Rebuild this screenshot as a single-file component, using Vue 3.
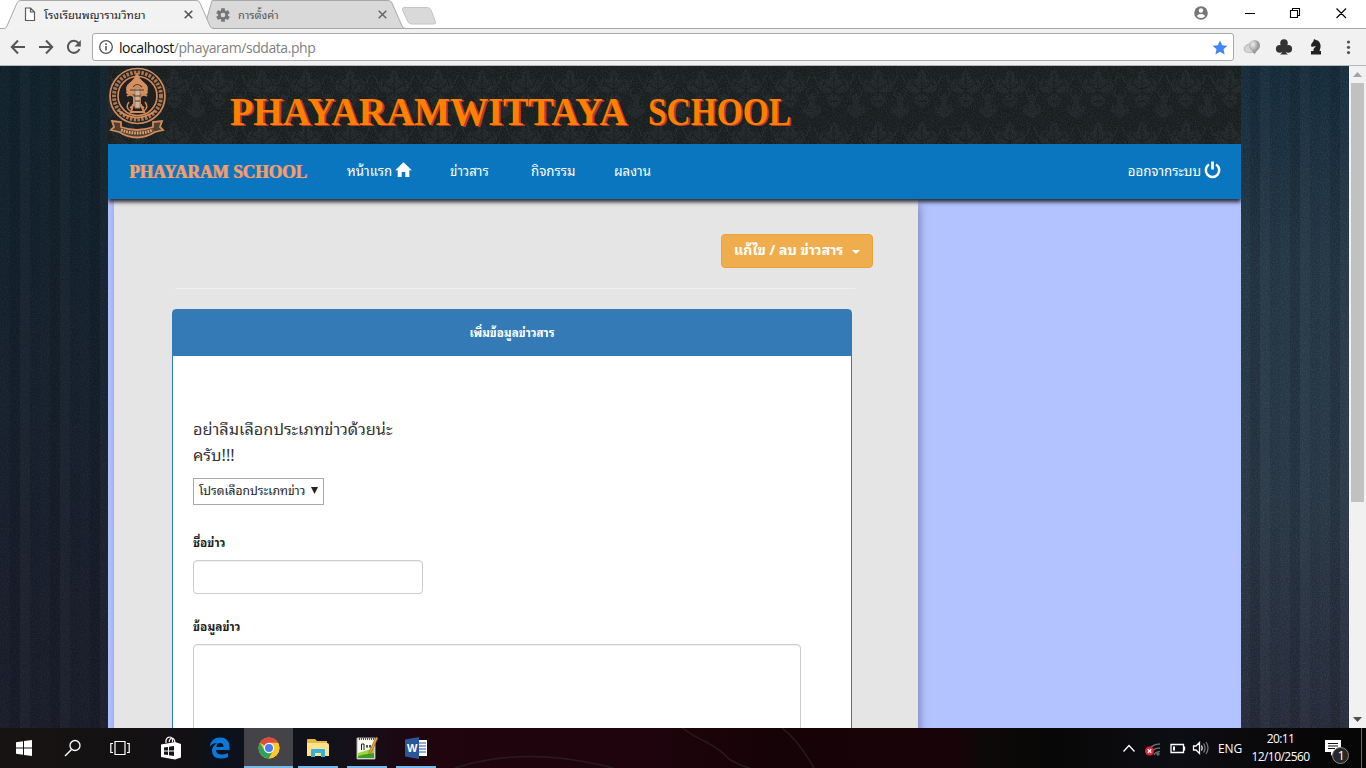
<script setup>
const nav = ['ข่าวสาร', 'กิจกรรม', 'ผลงาน']
</script>

<template>
  <div class="screen">
    <header class="tabs">
      <svg class="tab-shapes" width="450" height="29" viewBox="0 0 450 29">
        <path d="M204 28.5 212 0.5H388Q391 .5 392 3L402 26Q403 28.5 406 28.5Z" fill="#d9d9d9" stroke="#a8a8a8" />
        <path d="M0 28.5H4Q6 28.5 7 26L17 3Q18 .5 21 .5H196Q199 .5 200 3L210 26Q211 28.5 214 28.5V30H0Z" fill="#f2f2f2" stroke="#a8a8a8" />
        <path d="M405 7.5H427Q430 7.5 431 10L435.500 22Q436 24 434 24H412Q409 24 408 22L402.500 10Q401.500 7.500 405 7.500Z" fill="#d9d9d9" stroke="#c4c4c4" />
      </svg>
      <div class="tab first">
        <svg width="12" height="15" viewBox="0 0 12 15"><path d="M1.500 1H6.500L10.500 5V13.500H1.500ZM6.500 1V5H10.500" fill="#fff" stroke="#5a5a5a" stroke-width="1.200" /></svg>
        <span class="tab-title">โรงเรียนพญารามวิทยา</span>
        <svg class="close" width="9" height="9" viewBox="0 0 9 9"><path d="M.7.7 8.300 8.300M8.300.7.7 8.300" stroke="#555" stroke-width="1.600" /></svg>
      </div>
      <div class="tab second">
        <svg width="14" height="14" viewBox="-7 -7 14 14"><g fill="#777"><rect v-for="a in [0, 60, 120]" :key="a" x="-1.900" y="-6.800" width="3.800" height="13.600" rx=".5" :transform="`rotate(${a})`" /><circle r="5" /></g><circle r="2.300" fill="#d9d9d9" /></svg>
        <span class="tab-title">การตั้งค่า</span>
        <svg class="close" width="9" height="9" viewBox="0 0 9 9"><path d="M.7.7 8.300 8.300M8.300.7.7 8.300" stroke="#666" stroke-width="1.500" /></svg>
      </div>
      <svg class="window-buttons" width="166" height="28" viewBox="1190 0 166 28">
        <circle cx="1201" cy="13" r="6.800" fill="#757575" /><circle cx="1201" cy="10.500" r="2.200" fill="#fff" /><path d="M1197 16.500Q1197 14 1201 14T1205 16.500Q1201 19.500 1197 16.500" fill="#fff" />
        <path d="M1245 13.500H1255M1290.500 10.500H1297.500V17.500H1290.500ZM1292.500 10V8.500H1299.500V15.500H1298M1336.500 8.500 1346 18M1346 8.500 1336.500 18" fill="none" stroke="#000" stroke-width="1.100" />
      </svg>
    </header>

    <div class="toolbar">
      <svg width="92" height="36" viewBox="0 29 92 36" fill="none" stroke="#555" stroke-width="2">
        <path d="M25 47H12M18 40.500 11.800 47 18 53.500M39 47H52M46 40.500 52.200 47 46 53.500" />
        <path d="M78.500 43A6 6 0 1 0 79.500 49" /><path d="M80.800 40V46.500H74.500Z" fill="#555" stroke="none" />
      </svg>
      <div class="address">
        <svg width="16" height="16" viewBox="0 0 16 16"><circle cx="8" cy="8" r="6.300" fill="none" stroke="#555" stroke-width="1.300" /><path d="M8 7V11.500M8 4.300V5.900" stroke="#555" stroke-width="1.600" /></svg>
        <span class="url">localhost<i>/phayaram/sddata.php</i></span>
        <svg class="star" width="16" height="15" viewBox="0 0 16 15"><path d="M8 .4 10.200 5.200 15.400 5.700 11.500 9.200 12.600 14.400 8 11.700 3.400 14.400 4.500 9.200.6 5.700 5.800 5.200Z" fill="#4285f4" /></svg>
      </div>
      <svg width="132" height="36" viewBox="1234 29 132 36">
        <defs><radialGradient id="ball" cx=".35" cy=".3"><stop stop-color="#eee" /><stop offset="1" stop-color="#999" /></radialGradient></defs>
        <ellipse cx="1251" cy="48" rx="7" ry="4.500" fill="#d4d4d4" stroke="#bbb" transform="rotate(-15 1251 48)" />
        <path d="M1254.500 40A5.300 5.300 0 0 1 1260 45.500C1260 49 1257 50 1254.500 54.500 1252 50 1249 49 1249 45.500A5.500 5.500 0 0 1 1254.500 40" fill="url(#ball)" />
        <g fill="#333"><circle cx="1284" cy="43" r="3.800" /><circle cx="1279.800" cy="48.800" r="3.900" /><circle cx="1288.200" cy="48.800" r="3.900" /><path d="M1283 44H1285V50Q1285.500 53 1288 54.500H1280Q1282.500 53 1283 50Z" /></g>
        <path d="M1314 39 1316 40Q1321 41 1320.500 47.500L1319.500 51H1321V54.500H1311V51H1313.500Q1313 48.500 1316 46L1311.500 47 1311 44.500 1313.500 41Z" fill="#222" />
        <g fill="#555"><circle cx="1348.500" cy="42" r="1.600" /><circle cx="1348.500" cy="47.300" r="1.600" /><circle cx="1348.500" cy="52.600" r="1.600" /></g>
      </svg>
    </div>

    <main class="viewport">
      <svg class="backdrop" width="1349" height="662">
        <defs>
          <linearGradient id="leftShade" x2="0" y2="1"><stop stop-color="#10212b" /><stop offset=".5" stop-color="#15202c" /><stop offset="1" stop-color="#191b29" /></linearGradient>
          <linearGradient id="rightShade" x2="0" y2="1"><stop stop-color="#132a39" /><stop offset=".3" stop-color="#233644" /><stop offset=".65" stop-color="#283745" /><stop offset="1" stop-color="#252a39" /></linearGradient>
          <pattern id="stripes" width="40" height="10" patternUnits="userSpaceOnUse"><path d="M10 0H20V10H10Z" fill="#000" opacity=".12" /><path d="M30 0H40V10H30Z" fill="#000" opacity=".05" /><path d="M20 0H30V10H20Z" fill="#fff" opacity=".015" /></pattern>
          <filter id="grain"><feTurbulence type="fractalNoise" baseFrequency=".8" numOctaves="2" seed="4" /><feColorMatrix values="0 0 0 0 .5  0 0 0 0 .55  0 0 0 0 .6  .8 0 0 0 -.3" /></filter>
        </defs>
        <rect width="108" height="662" fill="url(#leftShade)" /><rect x="1241" width="108" height="662" fill="url(#rightShade)" />
        <rect width="1349" height="662" fill="url(#stripes)" />
        <rect width="108" height="662" filter="url(#grain)" opacity=".2" /><rect x="1241" width="108" height="662" filter="url(#grain)" opacity=".3" />
      </svg>
      <div class="site">
        <svg class="banner" width="1133" height="78" viewBox="108 66 1133 78">
          <defs>
            <pattern id="damask" x="108" y="66" width="44" height="52" patternUnits="userSpaceOnUse">
              <rect width="44" height="52" fill="#181d1e" />
              <g fill="#1f2526"><path d="M22 3Q29 9 25 14 35 10 37 18 39 27 27 27 34 35 22 42 10 35 17 27 5 27 7 18 9 10 19 14 15 9 22 3Z" /><path d="M0 27Q7 33 3 38 10 39 9 46 3 51 0 52ZM44 27Q37 33 41 38 34 39 35 46 41 51 44 52Z" /></g>
              <path d="M22 8V37M13 17Q16 22 22 23 28 22 31 17M15 32Q19 26 22 26 25 26 29 32M0 2Q9 5 8 12M44 2Q35 5 36 12M10 47Q22 41 34 47M17 11Q12 13 11 20M27 11Q32 13 33 20M18 36Q22 33 26 36M5 32Q2 37 6 43M39 32Q42 37 38 43" stroke="#161b1c" stroke-width="1.300" fill="none" />
              <path d="M20 11 17 16M24 11 27 16M12 21 17 25M32 21 27 25M2 9 6 18M42 9 38 18M19 30 22 34 25 30M3 22Q8 26 4 31M41 22Q36 26 40 31" stroke="#252b2c" fill="none" />
            </pattern>
          </defs>
          <rect x="108" y="66" width="1133" height="78" fill="url(#damask)" />
          <rect x="108" y="66" width="1133" height="78" filter="url(#grain)" opacity=".3" />
          <g class="emblem" fill="none" stroke="#d18b5c">
            <circle cx="137.500" cy="96" r="27.500" stroke-width="1.700" fill="#202020" />
            <circle cx="137.500" cy="96" r="23.500" stroke-width="4" stroke-dasharray="2.500 1.300" stroke="#aa7753" />
            <circle cx="137.500" cy="96" r="19.500" stroke-width="1.700" />
            <path d="M137 73Q139 79 143 82 149 86 147 91 149 95 142 94H132Q125 95 127 91 125 86 131 82 135 79 137 73Z" fill="#d6905f" stroke-width="1" />
            <path d="M127 96Q131 93 134 97V105L130 108M147 96Q143 93 140 97V105L144 108M131 112 133 105H141L144 112Z" stroke-width="2" />
            <path d="M129 102Q125 107 130 111M145 102Q149 107 144 111" stroke-width="1.500" />
            <path d="M135 88V108H140V88Z" fill="#c8b59f" stroke="#b77c56" stroke-width="1" />
            <path d="M134 96H141M135 101H140M133 87Q137 82 142 87M130 90H144" stroke="#4b3a2e" stroke-width="1.200" />
            <path d="M119 111Q137 124 155 111" stroke-width="2" />
            <path d="M112 121 121 122V127Q137 133 153 127V122L162 121 160 127 163 130 155 132Q137 143 119 132L111 130 114 127Z" stroke-width="1.800" fill="#54402f" />
            <path d="M121 130Q137 136 153 130" stroke="#d9a17a" stroke-width="3" stroke-dasharray="1.700 1" />
          </g>
          <g class="display main-title">
            <text x="230" y="125" textLength="397" lengthAdjust="spacingAndGlyphs">PHAYARAMWITTAYA</text>
            <text x="648" y="125" textLength="143" lengthAdjust="spacingAndGlyphs">SCHOOL</text>
          </g>
        </svg>

        <nav class="navbar">
          <svg class="brand" width="188" height="50"><text class="display brand-text" x="1" y="31" textLength="178" lengthAdjust="spacingAndGlyphs">PHAYARAM SCHOOL</text></svg>
          <a class="home"><span>หน้าแรก</span>
            <svg width="17" height="16" viewBox="0 0 17 16"><path d="M8.500.3 16.800 8.300H14.300V15H10.300V10H6.700V15H2.700V8.300H.2Z" fill="#fff" /></svg>
          </a>
          <a v-for="(n, i) in nav" :key="n" :class="'link' + i"><span>{{ n }}</span></a>
          <a class="logout"><span>ออกจากระบบ</span>
            <svg width="17" height="18" viewBox="0 0 17 18"><path d="M5 3.500A6.700 6.700 0 1 0 12 3.500" fill="none" stroke="#fff" stroke-width="2.500" /><path d="M8.500.5V8.500" stroke="#fff" stroke-width="2.700" /></svg>
          </a>
        </nav>

        <section class="content">
          <div class="action-row"><button class="edit"><span>แก้ไข / ลบ ข่าวสาร</span><b class="caret"></b></button></div>
          <div class="rule"></div>
          <div class="panel">
            <h1>เพิ่มข้อมูลข่าวสาร</h1>
            <div class="panel-body">
              <p class="notice">อย่าลืมเลือกประเภทข่าวด้วยน่ะ<br>ครับ!!!</p>
              <div class="select"><span>โปรดเลือกประเภทข่าว</span><svg width="7" height="9"><path d="M0 0H7L3.500 7Z" fill="#222" /></svg></div>
              <label>ชื่อข่าว</label>
              <div class="input"></div>
              <label>ข้อมูลข่าว</label>
              <div class="textarea"></div>
            </div>
          </div>
        </section>
      </div>
      <div class="scrollbar">
        <svg width="17" height="17"><path d="M4 11 8.500 6 13 11Z" fill="#a3a3a3" /></svg>
        <div class="thumb"></div>
        <svg class="down" width="17" height="17"><path d="M4 6H13L8.500 11Z" fill="#505050" /></svg>
      </div>
    </main>

    <footer class="taskbar">
      <svg class="wallpaper" width="1366" height="40">
        <defs><linearGradient id="task"><stop stop-color="#171312" /><stop offset=".14" stop-color="#121013" /><stop offset=".16" stop-color="#0b111c" /><stop offset=".25" stop-color="#13111a" /><stop offset=".31" stop-color="#20050e" /><stop offset=".46" stop-color="#20040d" /><stop offset=".56" stop-color="#160307" /><stop offset=".7" stop-color="#180308" /><stop offset=".72" stop-color="#0d0908" /><stop offset=".77" stop-color="#080707" /><stop offset=".86" stop-color="#0d0e14" /><stop offset=".94" stop-color="#090708" /><stop offset="1" stop-color="#060606" /></linearGradient></defs>
        <rect width="1366" height="40" fill="url(#task)" />
        <path d="M455 40Q525 17 613 40M682 0Q693 8 706 14 720 21 729 31 740 38 750 40M782 0Q798 12 814 40" fill="none" stroke="#292229" stroke-width="1.500" opacity=".8" />
      </svg>
      <div class="apps">
        <div class="app"><svg width="16" height="16"><path d="M0 2.300 7 1.300V7.500H0ZM8 1.100 16 0V7.500H8ZM0 8.500H7V14.700L0 13.700ZM8 8.500H16V16L8 14.900Z" fill="#fff" /></svg></div>
        <div class="app"><svg width="18" height="18"><circle cx="11" cy="6.500" r="5" fill="none" stroke="#fff" stroke-width="1.300" /><path d="M7.500 10.500 1 17" stroke="#fff" stroke-width="1.500" /></svg></div>
        <div class="app task-view"><svg width="20" height="16" fill="none" stroke="#fff" stroke-width="1.200"><path d="M5 1.500H15V14.500H5ZM3 3.500H.8V12.500H3M17 3.500H19.200V12.500H17" /></svg></div>
        <div class="app"><svg width="22" height="24"><path d="M1 8.500 15 6V23.500L1 21ZM15 6 21 8V21.500L15 23.500" fill="#fff" /><path d="M6 7V4Q7 1 10 1T12.500 6M9 6Q10 2 12 2T15 6" fill="none" stroke="#fff" stroke-width="1.200" /><path d="M4 11.500 8 11V14.500H4ZM9 10.800 14 10V14.500H9ZM4 15.500H8V19L4 18.500ZM9 15.500H14V20L9 19.200Z" fill="#15121a" /></svg></div>
        <div class="app"><svg width="21" height="22"><path d="M.5 10Q2 .5 11 .5 20.500.5 20.500 10V13H7Q7 17.500 13 17.500 16 17.500 19 16V20Q16 21.500 12 21.500 3 21.500 3 14 3 9 8 6 3 6 .5 10ZM7.500 10H14.500Q14.500 6 11 6T7.500 10Z" fill="#0879d8" fill-rule="evenodd" /></svg></div>
        <div class="app active"><svg width="22" height="22" viewBox="-11 -11 22 22"><circle r="10.500" fill="#fbc927" /><path d="M0 0-9.100-5.200A10.500 10.500 0 0 1 9.100-5.200H0Z" fill="#df4b3e" /><path d="M-9.100-5.200A10.500 10.500 0 0 0 0 10.500L4.500 2.500-4.500 2.500Z" fill="#2ba35b" /><path d="M0-5H9.200A10.500 10.500 0 0 1 0 10.500L4.500 2Z" fill="#fbc927" /><circle r="5.200" fill="#fff" /><circle r="4" fill="#477eea" /></svg></div>
        <div class="app open"><svg width="22" height="20"><path d="M0 2Q0 1 1 1H8L10 3H20V18H0Z" fill="#e9b93c" /><path d="M0 5H20Q22 5 22 7V18H0Z" fill="#ffe28a" /><path d="M4 19V12Q4 11 5 11H17Q18 11 18 12V19H14V15H8V19Z" fill="#35aee0" /></svg></div>
        <div class="app open"><svg width="24" height="25"><path d="M2 2H20V23H2Z" fill="#f7f9ec" stroke="#aaa" /><path d="M3 17Q10 15 19 12V22H3Z" fill="#9bd643" /><path d="M3 20Q11 18 19 17V22H3Z" fill="#3e9b24" /><path d="M4 3H20" stroke="#555" stroke-width="2" stroke-dasharray="1 1" /><path d="M6.500 14V8H9V14M11 10H13M14 10H16M12 9V12M15 9V12" stroke="#222" fill="none" /><path d="M23 2 16 17 14 19 14 16 21 1Z" fill="#e5a52f" stroke="#754d1e" stroke-width=".5" /></svg></div>
        <div class="app open"><svg width="23" height="22"><path d="M13 3H22V19H13Z" fill="#fff" /><path d="M14 6H21M14 9H21M14 12H21M14 15H21" stroke="#2b579a" /><path d="M0 2.500 14 0V22L0 19.500Z" fill="#2b579a" /><text x="2" y="15" class="word">W</text></svg></div>
      </div>
      <svg class="tray" width="100" height="40" viewBox="1118 728 100 40" fill="none" stroke="#fff" stroke-width="1.300">
        <path d="M1123.500 751.500 1129 745.500 1134.500 751.500" />
        <g stroke="#6b6b6b"><path d="M1147 754Q1150 744 1160 744M1150 754Q1153 748 1160 748M1154 755Q1155 752 1160 751.500" /><circle cx="1158" cy="754" r="1" fill="#888" /></g>
        <circle cx="1149.500" cy="751" r="4.500" fill="#df2630" stroke="none" /><path d="M1147.800 749.300 1151.200 752.700M1151.200 749.300 1147.800 752.700" />
        <path d="M1171 744.500H1183.500V752.500H1171ZM1184.500 746.500V750.500" /><path d="M1173 746.500H1175V750.500H1173Z" fill="#fff" stroke="none" />
        <path d="M1193.500 746H1196L1199.500 742.500V753.500L1196 750H1193.500ZM1201.500 745.500Q1203 748 1201.500 750.500" /><path d="M1203.500 743.500Q1206.500 748 1203.500 752.500M1206 742Q1210 748 1206 754" stroke="#777" />
      </svg>
      <span class="language">ENG</span>
      <div class="clock"><span class="time">20:11</span><span class="date">12/10/2560</span></div>
      <svg class="notify" width="46" height="40" viewBox="1320 728 46 40">
        <path d="M1325 740H1341V752H1334L1331 756V752H1325Z" fill="#fff" /><path d="M1328 743.500H1338M1328 746H1338M1328 748.500H1335" stroke="#111" /><circle cx="1340.500" cy="755.500" r="8" fill="#272727" stroke="#8a8a8a" /><text x="1337.500" y="760" class="badge">1</text><path d="M1361.500 728V768" stroke="#666" />
      </svg>
    </footer>
  </div>
</template>

<style>
html, body { margin: 0; overflow: hidden; }
</style>

<style scoped>
* { box-sizing: border-box; }
svg { display: block; flex: none; }
.screen { --thai: "Noto Sans Thai Looped", "Noto Looped Thai", Loma, Waree, Garuda, "Tlwg Typo", Norasi, "Noto Serif Thai", "Noto Sans Thai", "Noto Sans", sans-serif; width: 1366px; height: 768px; display: flex; flex-direction: column; overflow: hidden; background: #fff; color: #222; font-family: var(--thai); white-space: nowrap; }
.tabs { position: relative; height: 29px; flex: none; display: flex; border-bottom: 1px solid #a8a8a8; }
.tab-shapes { position: absolute; left: 0; top: 0; }
.tab { position: relative; height: 29px; display: flex; align-items: center; font-size: 11.2px; }
.first { width: 193px; padding-left: 24px; margin-right: 23px; }
.second { width: 171px; color: #555; }
.tab-title { margin: -2px 0 0 8px; line-height: 20px; }
.second .tab-title { font-size: 11px; }
.close { margin-left: auto; }
.window-buttons { margin-left: auto; margin-right: 10px; }
.toolbar { height: 37px; flex: none; background: #f1f1f1; display: flex; align-items: center; border-bottom: 1px solid #b5b8b8; }
.address { width: 1142px; height: 28px; border: 1px solid #a9a9a9; border-radius: 3px; background: #fff; display: flex; align-items: center; padding: 0 5px 0 5px; }
.url { margin-left: 5px; font: 14px "Open Sans", sans-serif; letter-spacing: -.43px; color: #111; }
.url i { font-style: normal; color: #808080; }
.star { margin-left: auto; }
.viewport { position: relative; height: 662px; flex: none; display: flex; overflow: hidden; }
.backdrop { position: absolute; inset: 0; }
.site { position: relative; width: 1133px; margin-left: 108px; background: #b3c3ff; overflow: hidden; }
.display { font-family: "Liberation Serif", serif; font-weight: bold; }
.main-title { font-size: 41px; fill: #ff8000; text-shadow: 2px 1px 0 #bd392b; }
.brand-text { font-size: 19px; fill: #f4a261; text-shadow: 1px 0 0 #cf86a0; }
.navbar { position: relative; z-index: 2; height: 55px; background: #0a76c0; box-shadow: 0 3px 4px 0 #292932; display: flex; align-items: center; padding: 0 20px; color: #fff; font-size: 13.3px; }
.brand { margin-right: 31px; }
.navbar a { display: flex; align-items: center; line-height: 20px; }
.navbar a span { margin-top: -4px; }
.navbar a svg { margin-top: -4px; }
.home { width: 103px; gap: 3px; }
.link0 { width: 81px; }
.link1 { width: 83px; }
.navbar .logout { margin-left: auto; gap: 3px; }
.content { width: 804px; height: 530px; margin-left: 6px; padding-top: 35px; background: #e5e5e5; box-shadow: 2px 6px 8px rgba(40, 45, 80, .4); }
.action-row { padding-right: 45px; display: flex; justify-content: flex-end; }
.edit { width: 152px; height: 34px; display: flex; align-items: center; justify-content: space-between; padding: 0 12px; border: 1px solid #eea236; border-radius: 4px; background: #f0ad4e; color: #fff; font: bold 14px var(--thai); }
.edit span { margin-top: -5px; }
.caret { margin-top: 1px; border: 4px solid transparent; border-top-color: #fff; border-bottom: 0; }
.rule { width: 680px; height: 1px; margin: 20px 0 20px 61px; background: #eee; }
.panel { width: 680px; height: 500px; margin-left: 58px; border: 1px solid #337ab7; border-radius: 4px 4px 0 0; background: #fff; }
.panel h1 { margin: 0; height: 46px; background: #337ab7; color: #fff; font-size: 11.7px; line-height: 44px; text-align: center; }
.panel-body { padding: 59px 20px 0; display: flex; flex-direction: column; }
.notice { margin: 0 0 1px; height: 62px; font-size: 16.3px; line-height: 26px; color: #333; }
.select { width: 131px; height: 27px; border: 1px solid #a9a9a9; padding: 0 5px; display: flex; align-items: center; justify-content: space-between; font-size: 12.1px; }
.select span { margin-top: -4px; }
label { height: 20px; margin-top: 27px; margin-bottom: 8px; font-size: 11.9px; line-height: 20px; font-weight: bold; }
.input { width: 230px; height: 34px; border: 1px solid #ccc; border-radius: 4px; box-shadow: inset 0 1px 1px #0001; }
.input + label { margin-top: 22px; }
.textarea { width: 608px; height: 140px; border: 1px solid #ccc; border-radius: 4px; box-shadow: inset 0 1px 1px #0001; }
.scrollbar { position: relative; width: 17px; margin-left: 108px; flex: none; background: #f1f1f1; display: flex; flex-direction: column; }
.thumb { width: 13px; height: 419px; margin-left: 2px; background: #c1c1c1; }
.down { margin-top: auto; }
.taskbar { position: relative; height: 40px; flex: none; display: flex; align-items: center; color: #fff; font-family: "Open Sans", sans-serif; font-size: 12px; }
.wallpaper { position: absolute; inset: 0; }
.apps, .tray, .language, .clock, .notify { position: relative; }
.apps { display: flex; height: 40px; margin-left: -1px; }
.app { width: 49px; height: 40px; display: flex; align-items: center; justify-content: center; }
.task-view { padding-right: 4px; }
.active { background: #444347; box-shadow: inset 0 -2px #76b9ed; }
.open { border-bottom: 2px solid #76b9ed; padding-top: 2px; width: 40px; margin: 0 4px 0 5px; }
.word { fill: #fff; font: bold 11px "Liberation Sans", sans-serif; }
.tray { margin-left: auto; }
.language { width: 34px; text-align: center; margin-left: -5px; letter-spacing: -.2px; }
.clock { width: 72px; margin-right: 1px; display: flex; flex-direction: column; align-items: center; line-height: 18px; padding-right: 5px; }
.time { letter-spacing: -.6px; }
.date { letter-spacing: -.55px; }
.badge { font: 13px "Open Sans", sans-serif; fill: #fff; }
</style>
